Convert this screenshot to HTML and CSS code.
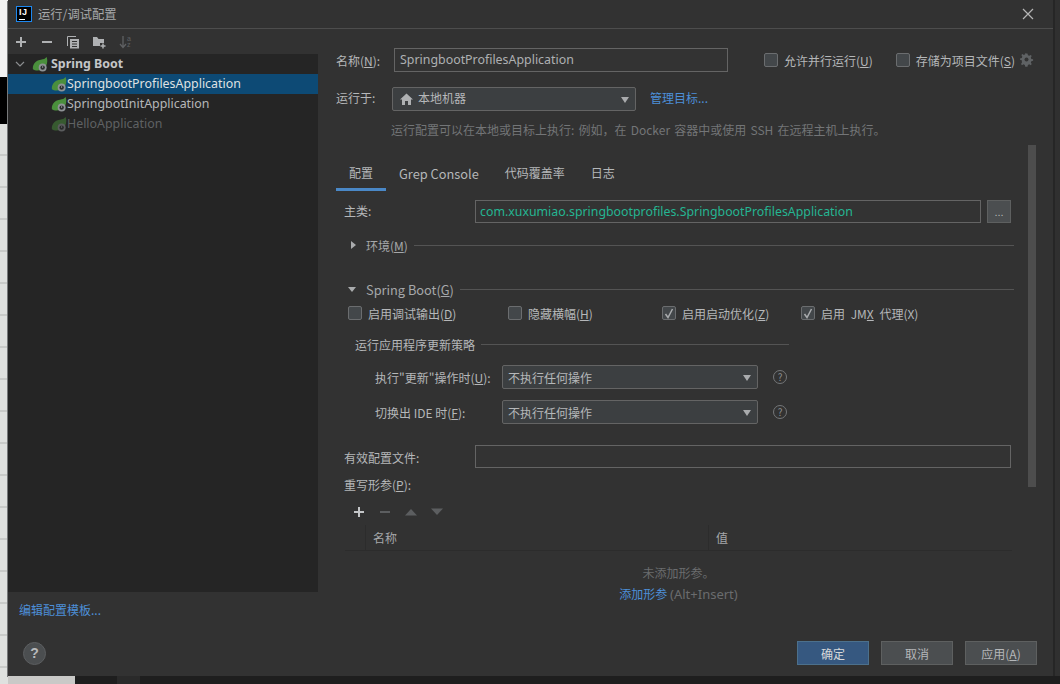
FILE: index.html
```html
<!DOCTYPE html>
<html lang="zh">
<head>
<meta charset="utf-8">
<title>运行/调试配置</title>
<link rel="stylesheet" href="styles.css">
</head>
<body>
<svg class="defs" width="0" height="0">
  <defs>
    <g id="spring">
      <path d="M1 14C0 8 5 3.500 10 3C13 2.700 15 2 16.500 0C18.500 6 16.500 12 11 14.500C7 16 3 15.500 1 14Z" fill="currentColor"/>
      <circle cx="12" cy="12" r="4.500" fill="#8f9396"/>
      <circle cx="12" cy="12" r="2.500" fill="#2d2f30"/>
      <path d="M12 10v2.500" stroke="#8f9396" stroke-width="1"/>
    </g>
  </defs>
</svg>
<div class="backdrop-left">
  <div class="strip-top"></div>
  <div class="strip-black"></div>
  <div class="strip-rest"></div>
</div>
<div class="stage">
  <main class="dialog">
    <header class="titlebar">
      <span class="logo"><span class="logo-text">IJ</span><span class="logo-bar"></span></span>
      <span class="title">运行/调试配置</span>
      <svg class="close" width="12" height="12" viewBox="0 0 12 12"><path d="M1 1l10 10M11 1L1 11" stroke="#b5b5b5" stroke-width="1.200"/></svg>
    </header>
    <div class="body">
      <aside class="side">
        <div class="toolbar">
          <svg width="14" height="14" viewBox="0 0 14 14"><path d="M7 2v10M2 7h10" stroke="#afb1b3" stroke-width="2"/></svg>
          <svg width="14" height="14" viewBox="0 0 14 14"><path d="M2 7h10" stroke="#afb1b3" stroke-width="2"/></svg>
          <svg width="14" height="14" viewBox="0 0 14 14" fill="none"><path d="M1.500 11V1.500H10" stroke="#afb1b3"/><rect x="4" y="4" width="9" height="9.500" fill="#afb1b3"/><path d="M6 6.500h5M6 9h5M6 11.500h5" stroke="#333"/></svg>
          <svg width="15" height="14" viewBox="0 0 15 14"><path d="M1 2h4l1.500 2H12v4H8v3H1Z" fill="#afb1b3"/><path d="M11 8.500v5M8.500 11h5" stroke="#afb1b3" stroke-width="1.500"/></svg>
          <span class="sort"><svg width="8" height="14" viewBox="0 0 8 14" fill="none"><path d="M4 1v11M1 9l3 3.500L7 9" stroke="#5f6163" stroke-width="1.300"/></svg><span class="sort-text">a<br>z</span></span>
        </div>
        <ul class="tree">
          <li class="tree-row group">
            <svg class="chevron" width="10" height="6" viewBox="0 0 10 6" fill="none"><path d="M1 1l4 4 4-4" stroke="#8b8d8f" stroke-width="1.200"/></svg>
            <svg class="spring" width="16" height="15" viewBox="0 0 18 17"><use href="#spring"/></svg>
            <span>Spring Boot</span>
          </li>
          <li class="tree-row selected"><svg class="spring" width="16" height="15" viewBox="0 0 18 17"><use href="#spring"/></svg><span>SpringbootProfilesApplication</span></li>
          <li class="tree-row"><svg class="spring" width="16" height="15" viewBox="0 0 18 17"><use href="#spring"/></svg><span>SpringbotInitApplication</span></li>
          <li class="tree-row off"><svg class="spring" width="16" height="15" viewBox="0 0 18 17"><use href="#spring"/></svg><span>HelloApplication</span></li>
        </ul>
        <div class="side-foot">
          <a class="link">编辑配置模板...</a>
          <span class="help">?</span>
        </div>
      </aside>
      <section class="content">
        <div class="scrollbar"></div>
        <div class="row row-name">
          <label class="lab lab-name">名称(<u>N</u>):</label>
          <div class="input name-input">SpringbootProfilesApplication</div>
          <span class="check check-a"><i class="box"></i><span>允许并行运行(<u>U</u>)</span></span>
          <span class="check check-b"><i class="box"></i><span>存储为项目文件(<u>S</u>)</span></span>
          <svg class="gear" width="14" height="14" viewBox="0 0 14 14"><path d="M7 .500l1.500 0 .5 2 1.500.7 1.800-1 1 1.200-1 1.800.6 1.500 2 .5v1.600l-2 .5-.6 1.500 1 1.800-1 1.200-1.800-1-1.500.7-.5 2H6l-.5-2-1.500-.7-1.800 1-1-1.200 1-1.800L2 8.300l-2-.5V6.200l2-.5.600-1.500-1-1.800 1-1.200 1.800 1 1.500-.7.500-2Z" transform="scale(.88)" fill="#5f6264"/><circle cx="6.500" cy="6.500" r="2" fill="#333"/></svg>
        </div>
        <div class="row row-run">
          <label class="lab lab-name">运行于:</label>
          <div class="select run-select">
            <svg width="13" height="12" viewBox="0 0 13 12"><path d="M6.500 0.500L13 6.500H11V12H8V8H5V12H2V6.500H0Z" fill="#afb1b3"/></svg>
            <span>本地机器</span>
            <i class="arrow"></i>
          </div>
          <a class="link manage">管理目标...</a>
        </div>
        <p class="hint">运行配置可以在本地或目标上执行: 例如，在 Docker 容器中或使用 SSH 在远程主机上执行。</p>
        <nav class="tabs">
          <span class="tab active">配置</span>
          <span class="tab tab-grep">Grep Console</span>
          <span class="tab">代码覆盖率</span>
          <span class="tab">日志</span>
        </nav>
        <div class="form">
          <div class="row row-main">
            <label class="lab lab-form lab-main">主类:</label>
            <div class="input main-input">com.xuxumiao.springbootprofiles.SpringbootProfilesApplication</div>
            <button class="dots">...</button>
          </div>
          <div class="section sec-env">
            <i class="tri-right"></i><span class="sec-title">环境(<u>M</u>)</span><span class="line"></span>
          </div>
          <div class="section sec-boot">
            <i class="tri-down"></i><span class="sec-title">Spring Boot(<u>G</u>)</span><span class="line"></span>
          </div>
          <div class="checks">
            <span class="check c1"><i class="box"></i><span>启用调试输出(<u>D</u>)</span></span>
            <span class="check c2"><i class="box"></i><span>隐藏横幅(<u>H</u>)</span></span>
            <span class="check c3"><i class="box on"><svg width="10" height="11" viewBox="0 0 10 11" fill="none"><path d="M1.500 6l2.500 3.500L8.500 1" stroke="#a9abad" stroke-width="1.500"/></svg></i><span>启用启动优化(<u>Z</u>)</span></span>
            <span class="check c4"><i class="box on"><svg width="10" height="11" viewBox="0 0 10 11" fill="none"><path d="M1.500 6l2.500 3.500L8.500 1" stroke="#a9abad" stroke-width="1.500"/></svg></i><span>启用 JM<u>X</u> 代理(X)</span></span>
          </div>
          <div class="policy-head"><span>运行应用程序更新策略</span><span class="line"></span></div>
          <div class="row row-policy p1">
            <label class="lab lab-policy">执行"更新"操作时(<u>U</u>):</label>
            <div class="select policy-select"><span>不执行任何操作</span><i class="arrow"></i></div>
            <span class="q">?</span>
          </div>
          <div class="row row-policy p2">
            <label class="lab lab-policy">切换出 IDE 时(<u>F</u>):</label>
            <div class="select policy-select"><span>不执行任何操作</span><i class="arrow"></i></div>
            <span class="q">?</span>
          </div>
          <div class="row row-profile">
            <label class="lab lab-form lab-profile">有效配置文件:</label>
            <div class="input profile-input"></div>
          </div>
          <div class="lab params-label">重写形参(<u>P</u>):</div>
          <div class="param-tools">
            <svg width="12" height="12" viewBox="0 0 12 12"><path d="M6 1v10M1 6h10" stroke="#c4c6c8" stroke-width="2"/></svg>
            <svg width="12" height="12" viewBox="0 0 12 12"><path d="M1 6h10" stroke="#5c5e60" stroke-width="2"/></svg>
            <svg width="12" height="12" viewBox="0 0 12 12"><path d="M0 9.500L6 3l6 6.500Z" fill="#5c5e60"/></svg>
            <svg width="12" height="12" viewBox="0 0 12 12"><path d="M0 2.500L6 9l6-6.500Z" fill="#5c5e60"/></svg>
          </div>
          <div class="table-head"><span class="th th-name">名称</span><span class="th th-val">值</span></div>
          <div class="empty">
            <div class="empty-a">未添加形参。</div>
            <div class="empty-b"><a class="link">添加形参</a> <span class="shortcut">(Alt+Insert)</span></div>
          </div>
        </div>
        <footer class="buttons">
          <button class="btn primary">确定</button>
          <button class="btn">取消</button>
          <button class="btn">应用(<u>A</u>)</button>
        </footer>
      </section>
    </div>
  </main>
  <div class="backdrop-bottom">
    <span class="bb-light"></span><span class="bb-a"></span><span class="bb-b"></span>
  </div>
</div>
</body>
</html>
```

FILE: styles.css
```css
* { box-sizing: border-box; }
html, body { height: 100%; }
body {
  margin: 0;
  display: flex;
  overflow: hidden;
  background: #1e1e1e;
  font-family: "Noto Sans CJK SC", "Noto Sans", sans-serif;
  font-size: 12px;
  color: #b5b7b9;
}
.defs { position: absolute; }
u { text-underline-offset: 1px; }
.backdrop-left { width: 8px; height: 684px; display: flex; flex-direction: column; flex: none; }
.strip-top { height: 77px; background: #f2f2f2; }
.strip-black { height: 47px; background: #000; }
.strip-rest { flex: 1; background: repeating-linear-gradient(#dfe1df 0 30px, #c9cbc9 30px 32px); }
.stage { flex: 1; display: flex; flex-direction: column; min-width: 0; background: #303030; }
.dialog { width: 1045px; height: 676px; background: #323232; display: flex; flex-direction: column; box-shadow: -1px 1px 0 #77797a, 2px 0 0 #262626; }
.backdrop-bottom { flex: 1; display: flex; background: #1e1e1e; }
.bb-light { width: 67px; background: #c9c9c7; }
.bb-a { width: 42px; }
.bb-b { width: 23px; background: #2a2a2a; }
.titlebar { height: 29px; flex: none; display: flex; align-items: center; border-bottom: 1px solid #4d4d4d; padding-left: 8px; background: #323232; }
.logo { width: 16px; height: 16px; background: #000; border: 1px solid #1e88f0; position: relative; flex: none; display: block; }
.logo-text { position: absolute; left: 2px; top: -2px; font: bold 9px/14px "Liberation Sans", sans-serif; color: #fff; letter-spacing: .5px; }
.logo-bar { position: absolute; left: 2px; bottom: 1px; width: 6px; height: 1px; background: #fff; }
.title { margin-left: 6px; font-size: 12.300px; color: #a6a8aa; }
.close { margin-left: auto; margin-right: 19px; }
.body { flex: 1; display: flex; min-height: 0; }
.side { width: 310px; flex: none; display: flex; flex-direction: column; }
.toolbar { height: 25px; flex: none; display: flex; align-items: center; gap: 12px; padding-left: 6px; }
.toolbar svg { flex: none; }
.sort { display: flex; align-items: center; gap: 0; }
.sort-text { font: 7px/6px "Liberation Sans", sans-serif; color: #5f6163; }
.tree { list-style: none; margin: 0; padding: 0; height: 538px; flex: none; background: #252525; }
.tree-row { height: 20px; display: flex; align-items: center; padding-left: 43px; font-family: "Noto Sans", sans-serif; font-size: 12.400px; color: #b5b7b9; }
.tree-row .spring { color: #4a8f3c; flex: none; margin-top: 1px; }
.tree-row span { margin-left: 0; padding-bottom: 2px; }
.group { padding-left: 7px; font-weight: 700; color: #c4c6c8; }
.group .chevron { margin-right: 7px; flex: none; }
.group span { margin-left: 3px; }
.selected { background: #0d4a75; color: #dfe1e3; }
.off { color: #5f6163; }
.off .spring { opacity: .5; }
.side-foot { flex: 1; padding: 9px 0 0 11px; display: flex; flex-direction: column; align-items: flex-start; }
.link { color: #4d8fd8; font-size: 12px; }
.help { margin-top: 24px; margin-left: 4px; width: 23px; height: 23px; border-radius: 50%; background: #4b4e50; border: 1px solid #5c5e60; color: #b8babc; font: bold 14px/21px "Liberation Sans", sans-serif; text-align: center; }
.content { flex: 1; position: relative; padding: 0 0 0 18px; display: flex; flex-direction: column; min-width: 0; }
.scrollbar { position: absolute; right: 17px; top: 116px; width: 8px; height: 342px; background: #4d4d4d; }
.row { display: flex; align-items: center; }
.lab { color: #b5b7b9; }
.lab-name { width: 58px; flex: none; }
.input { height: 24px; border: 1px solid #646464; background: #333; padding-left: 5px; line-height: 21px; font-family: "Noto Sans", sans-serif; font-size: 12.400px; color: #aeb0b2; }
.row-name { height: 24px; margin-top: 19px; }
.name-input { width: 334px; }
.check { display: inline-flex; align-items: center; color: #b5b7b9; white-space: nowrap; }
.box { width: 14px; height: 14px; border: 1px solid #6b6d6f; border-radius: 2px; background: #43474a; margin-right: 6px; flex: none; display: flex; align-items: center; justify-content: center; }
.check-a { margin-left: 36px; }
.check-b { margin-left: 23px; }
.gear { margin-left: 5px; }
.row-run { height: 24px; margin-top: 15px; }
.row-run .lab-name, .run-select span, .manage { padding-bottom: 3px; }
.select { height: 24px; border: 1px solid #646464; border-radius: 2px; background: #3c3f41; display: flex; align-items: center; padding-left: 5px; color: #b5b7b9; position: relative; }
.run-select { width: 244px; margin-left: -2px; gap: 5px; padding-left: 7px; }
.arrow { position: absolute; right: 6px; top: 9px; border-left: 4.500px solid transparent; border-right: 4.500px solid transparent; border-top: 6px solid #a9abad; }
.manage { margin-left: 14px; }
.hint { margin: 0; padding: 10px 0 0 55px; height: 46px; color: #737577; word-spacing: 1.500px; white-space: nowrap; }
.tabs { display: flex; height: 34px; flex: none; }
.tab { padding: 7px 13px 0; color: #b5b7b9; white-space: nowrap; }
.tab-grep { font-size: 12.800px; }
.tab.active { border-bottom: 3px solid #4a88c7; padding-bottom: 0; width: 50px; }
.form { padding-left: 8px; width: 678px; flex: 1; display: flex; flex-direction: column; min-height: 0; }
.row-main { height: 23px; margin-top: 9px; }
.lab-form { width: 131px; flex: none; }
.lab-main { padding-bottom: 2px; }
.lab-profile { padding-top: 2px; }
.main-input { width: 506px; height: 23px; color: #25b592; line-height: 21px; padding-left: 4px; font-size: 12.350px; }
.dots { width: 24px; height: 23px; margin-left: 6px; border: 1px solid #5e6060; background: #4b4e50; color: #b5b7b9; font-size: 11px; padding: 0; }
.section { display: flex; align-items: center; height: 18px; }
.sec-env { margin-top: 13px; padding-left: 7px; }
.sec-boot { margin-top: 26px; padding-left: 4px; }
.tri-right { border-top: 4.500px solid transparent; border-bottom: 4.500px solid transparent; border-left: 5px solid #a9abad; margin-right: 10px; }
.tri-down { border-left: 4.500px solid transparent; border-right: 4.500px solid transparent; border-top: 5px solid #a9abad; margin-right: 10px; }
.sec-title { white-space: nowrap; color: #a6a8aa; }
.sec-boot .sec-title { font-size: 12.800px; }
.line { flex: 1; height: 1px; background: #545454; margin-left: 6px; }
.checks { display: flex; height: 18px; margin-top: 6px; padding-left: 4px; }
.c1 { width: 160px; }
.c2 { width: 154px; }
.c3 { width: 139px; }
.c4 { word-spacing: 3px; }
.policy-head { display: flex; align-items: center; width: 445px; padding-left: 11px; margin-top: 13px; height: 18px; }
.row-policy { height: 24px; }
.p1 { margin-top: 12px; }
.p2 { margin-top: 11px; }
.lab-policy { width: 158px; flex: none; padding-left: 31px; white-space: nowrap; }
.policy-select { width: 256px; }
.q { width: 14px; height: 14px; margin-left: 15px; border: 1px solid #757779; border-radius: 50%; color: #8b8d8f; font-size: 10px; line-height: 12px; text-align: center; }
.row-profile { margin-top: 21px; }
.profile-input { width: 536px; height: 23px; }
.params-label { margin-top: 8px; height: 18px; }
.param-tools { display: flex; gap: 14px; height: 18px; align-items: center; margin-top: 9px; padding-left: 9px; }
.table-head { display: flex; height: 26px; margin-left: 1px; border-bottom: 1px solid #2c2c2c; width: 667px; padding-left: 20px; margin-top: 4px; align-items: center; }
.th { height: 25px; line-height: 25px; border-left: 1px solid #2c2c2c; padding-left: 7px; color: #a6a8aa; }
.th-name { width: 343px; }
.empty { text-align: center; width: 669px; margin-top: 13px; color: #6a6c6e; }
.empty-b { margin-top: 4px; color: #6a6c6e; }
.shortcut { font-size: 13px; font-family: "Noto Sans", sans-serif; }
.buttons { position: absolute; right: 16px; bottom: 11px; display: flex; gap: 12px; }
.btn { width: 72px; height: 24px; border: 1px solid #5e6060; background: #4b4e50; color: #b5b7b9; font: 12px "Noto Sans CJK SC", sans-serif; padding: 0; }
.btn.primary { background: #365880; border-color: #4c708c; color: #d6d8da; }
```
